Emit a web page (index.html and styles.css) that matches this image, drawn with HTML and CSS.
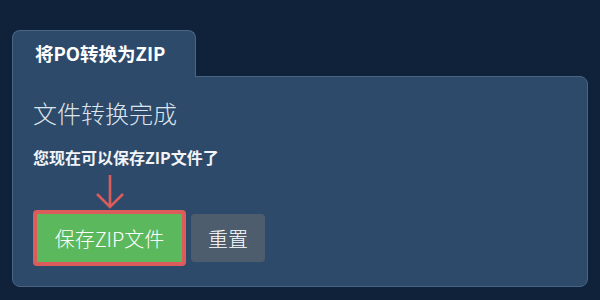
FILE: index.html
```html
<!DOCTYPE html>
<html lang="zh-CN">
<head>
    <meta charset="UTF-8">
    <title>将PO转换为ZIP</title>
    <link rel="stylesheet" href="styles.css">
</head>
<body>
    <div class="page">
        <div class="tabs">
            <div class="tab">将PO转换为ZIP</div>
        </div>
        <div class="panel">
            <h2 class="status">文件转换完成</h2>
            <p class="hint">您现在可以保存ZIP文件了</p>
            <div class="actions">
                <div class="highlight">
                    <svg class="arrow" width="30" height="36" viewBox="0 0 30 36">
                        <path d="M15 1 V33 M2 20 L15 33 L28 20" fill="none" stroke="#dc5c5c" stroke-width="2.6"/>
                    </svg>
                    <button class="btn btn-save">保存ZIP文件</button>
                </div>
                <button class="btn btn-reset">重置</button>
            </div>
        </div>
    </div>
</body>
</html>
```

FILE: styles.css
```css
body, html {
    margin: 0;
    padding: 0;
    height: 100%;
    background-color: #10223a;
    font-family: "Noto Sans CJK SC", "Noto Sans", sans-serif;
    color: #fff;
}

.page {
    padding: 30px 12px 0 12px;
}

.tabs {
    display: flex;
}

.tab {
    background-color: #2d4a6a;
    border: 1px solid #4a6584;
    border-bottom: none;
    border-radius: 8px 8px 0 0;
    padding: 10px 30px 11px 22px;
    margin-bottom: -1px;
    font-size: 18.5px;
    font-weight: bold;
    line-height: 25px;
    position: relative;
    z-index: 1;
}

.panel {
    background-color: #2d4a6a;
    border: 1px solid #4a6584;
    border-radius: 0 8px 8px 8px;
    padding: 20px 20px 20px 20px;
}

.status {
    margin: 0;
    font-size: 24px;
    font-weight: 300;
    line-height: 31px;
    color: #dde4ec;
}

.hint {
    margin: 17px 0 0 0;
    font-size: 16px;
    font-weight: bold;
    line-height: 24px;
    color: #f2f4f7;
}

.actions {
    display: flex;
    align-items: center;
    gap: 5px;
    margin-top: 41px;
}

.highlight {
    position: relative;
    border: 4px solid #dc5c5c;
    border-radius: 4px;
    display: flex;
}

.arrow {
    position: absolute;
    left: 50%;
    top: -40px;
    transform: translateX(-50%);
}

.btn {
    font-family: inherit;
    font-size: 20px;
    font-weight: 300;
    height: 48px;
    border: none;
    border-radius: 4px;
    color: #fff;
    padding: 0;
    cursor: pointer;
}

.btn-save {
    background-color: #5cb85c;
    border-radius: 0;
    width: 145px;
}

.btn-reset {
    background-color: #4e5d6e;
    width: 74px;
}
```
